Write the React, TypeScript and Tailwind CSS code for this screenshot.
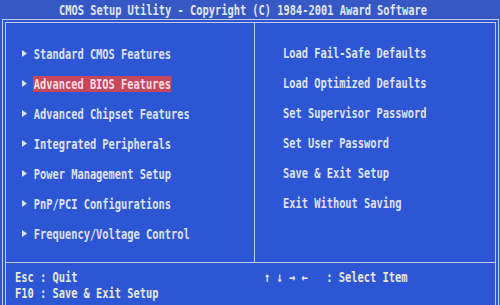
const leftItems = [
  "Standard CMOS Features",
  "Advanced BIOS Features",
  "Advanced Chipset Features",
  "Integrated Peripherals",
  "Power Management Setup",
  "PnP/PCI Configurations",
  "Frequency/Voltage Control",
]

const rightItems = [
  "Load Fail-Safe Defaults",
  "Load Optimized Defaults",
  "Set Supervisor Password",
  "Set User Password",
  "Save & Exit Setup",
  "Exit Without Saving",
]

const selected = 1

function Txt({ children, className = "" }: { children: React.ReactNode; className?: string }) {
  return (
    <span className={"inline-block origin-left scale-x-74 whitespace-pre font-['DejaVu_Sans_Mono',monospace] text-[14px] font-bold leading-[16px] " + className}>
      {children}
    </span>
  )
}

function Pointer() {
  return (
    <svg width="5" height="7" viewBox="0 0 5 7" className="shrink-0">
      <path d="M0 0L5 3.5L0 7Z" fill="#e2e4f0" />
    </svg>
  )
}

export default function App() {
  return (
    <div className="h-[305px] w-[500px] overflow-hidden bg-[#2c56d4]">
      {/* barre de titre */}
      <div className="flex h-[19px] items-center bg-[#3658c4] pl-[59px]">
        <Txt className="text-[#e2e6f2]">CMOS Setup Utility - Copyright (C) 1984-2001 Award Software</Txt>
      </div>

      {/* cadre double */}
      <div className="ml-[2px] mr-[1px] h-[300px] border border-[#c4cbe8] p-[2px]">
        <div className="h-full border border-[#c4cbe8]">
          <div className="grid h-[239px] grid-cols-[249px_1fr]">
            <div className="flex flex-col border-r border-[#c4cbe8] pl-[16px] pt-[15px]">
              {leftItems.map((item, i) => (
                <div key={item} className="flex h-[30px] items-center">
                  <Pointer />
                  <div className="ml-[6px]">
                    <Txt className={i === selected ? "bg-[#c8465a] px-px text-[#f4dfe6]" : "px-px text-[#dfe2ee]"}>{item}</Txt>
                  </div>
                </div>
              ))}
            </div>
            <div className="flex flex-col pl-[28px] pt-[15px]">
              {rightItems.map((item) => (
                <div key={item} className="flex h-[30px] items-center">
                  <Txt className="text-[#dfe2ee]">{item}</Txt>
                </div>
              ))}
            </div>
          </div>

          {/* pied */}
          <div className="grid grid-cols-[258px_1fr] border-t border-[#c4cbe8] pt-[6px]">
            <div className="flex flex-col pl-[9px]">
              <div className="flex h-[16px] items-center">
                <Txt className="text-[#ebe9d6]">Esc : Quit</Txt>
              </div>
              <div className="flex h-[16px] items-center">
                <Txt className="text-[#ebe9d6]">F10 : Save & Exit Setup</Txt>
              </div>
            </div>
            <div className="flex h-[16px] items-center">
              <Txt className="text-[#ebe9d6]">{"↑ ↓ → ←   : Select Item"}</Txt>
            </div>
          </div>
        </div>
      </div>
    </div>
  )
}
